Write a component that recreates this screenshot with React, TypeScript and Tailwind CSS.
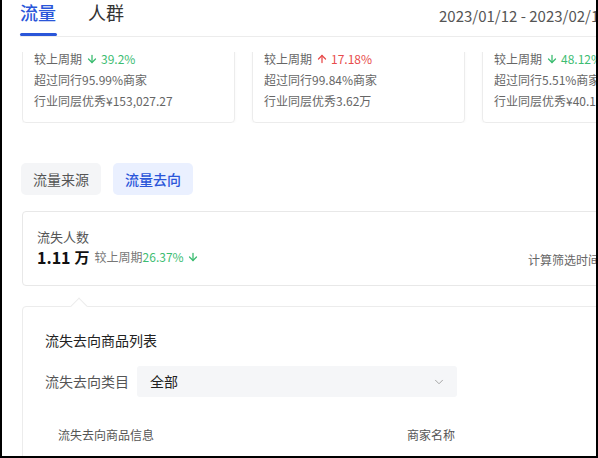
import { ArrowDown, ArrowUp, ChevronDown } from 'lucide-react';

const stats = [
  { trend: 'down', pct: '39.2%', beat: '超过同行95.99%商家', best: '行业同层优秀¥153,027.27' },
  { trend: 'up', pct: '17.18%', beat: '超过同行99.84%商家', best: '行业同层优秀3.62万' },
  { trend: 'down', pct: '48.12%', beat: '超过同行5.51%商家', best: '行业同层优秀¥40.12万' },
];

export default function App() {
  return (
    <div
      className="relative w-[598px] h-[458px] overflow-hidden bg-white border-l-2 border-r-2 border-b-2 border-black"
      style={{ fontFamily: '"Noto Sans CJK SC", "Noto Sans", sans-serif' }}
    >
      {/* Header tabs */}
      <div className="ml-[18px] w-[700px] h-[37px] flex border-b border-[#ececec]">
        <div className="flex flex-col w-[37px] shrink-0">
          <span className="text-[18px] leading-[24px] text-[#2a56d9] font-medium whitespace-nowrap">流量</span>
          <div className="mt-auto h-[3px] bg-[#2a56d9] rounded-sm" />
        </div>
        <span className="ml-[31px] text-[18px] leading-[24px] text-[#333] whitespace-nowrap">人群</span>
        <span className="ml-[315px] mt-[5px] text-[15px] leading-[22px] text-[#555] whitespace-nowrap">
          2023/01/12 - 2023/02/12
        </span>
      </div>

      {/* Stat cards, scrolled */}
      <div className="mt-[15px] ml-[20px] h-[71px] overflow-hidden flex items-end gap-[17px]">
        {stats.map((s, i) => (
          <div
            key={i}
            className="shrink-0 w-[213px] border border-[#ececec] rounded-[4px] shadow-[0_1px_3px_rgba(0,0,0,0.04)] pl-[11px] pb-[11px] text-[12px] leading-[21px] text-[#666] whitespace-nowrap"
          >
            <div className="h-[60px]" />
            <div className="flex items-center">
              较上周期
              {s.trend === 'down' ? (
                <span className="flex items-center ml-1 text-[#3dbd72]">
                  <ArrowDown size={12} strokeWidth={2.6} className="mr-[3px]" />
                  {s.pct}
                </span>
              ) : (
                <span className="flex items-center ml-1 text-[#e84c4c]">
                  <ArrowUp size={12} strokeWidth={2.6} className="mr-[3px]" />
                  {s.pct}
                </span>
              )}
            </div>
            <div>{s.beat}</div>
            <div>{s.best}</div>
          </div>
        ))}
      </div>

      {/* Segmented */}
      <div className="mt-[40px] ml-[19px] flex gap-[12px]">
        <button className="w-[80px] h-[32px] rounded-[5px] bg-[#f4f5f7] text-[14px] text-[#555]">流量来源</button>
        <button className="w-[80px] h-[32px] rounded-[5px] bg-[#eaf0ff] text-[14px] text-[#2a56d9] font-medium">
          流量去向
        </button>
      </div>

      {/* Summary */}
      <div className="mt-[16px] ml-[20px] w-[640px] border border-[#e8e8e8] rounded-[4px] pl-[14px] pt-[15px] pb-[18px]">
        <div className="text-[13px] leading-[20px] text-[#555]">流失人数</div>
        <div className="flex items-center h-[20px] whitespace-nowrap">
          <div className="w-[491px] shrink-0 flex items-center">
            <span className="text-[16px] font-bold text-[#111]">1.11</span>
            <span className="ml-[4px] text-[15px] font-bold text-[#111]">万</span>
            <span className="ml-[5px] text-[12px] text-[#777]">较上周期</span>
            <span className="text-[12px] text-[#3dbd72]">26.37%</span>
            <ArrowDown size={12} strokeWidth={2.6} className="ml-[3px] text-[#3dbd72]" />
          </div>
          <span className="mt-[6px] text-[12px] text-[#666]">计算筛选时间 2023/01/12</span>
        </div>
      </div>

      {/* List panel with arrow */}
      <div className="relative mt-[20px] ml-[20px] w-[640px] h-[200px] border border-[#ececec] rounded-[4px] pl-[22px] pt-[22px]">
        <div className="absolute -top-[7px] left-[50px] w-[12px] h-[12px] rotate-45 bg-white border-l border-t border-[#ececec]" />
        <div className="text-[14px] leading-[22px] text-[#222]">流失去向商品列表</div>
        <div className="mt-[15px] flex items-center">
          <span className="w-[92px] shrink-0 text-[14px] text-[#555]">流失去向类目</span>
          <div className="w-[320px] h-[31px] rounded-[3px] bg-[#f5f6f8] flex items-center pl-[13px] pr-[11px]">
            <span className="text-[14px] text-[#222]">全部</span>
            <ChevronDown size={14} strokeWidth={1.5} className="ml-auto text-[#999]" />
          </div>
        </div>
        <div className="mt-[28px] flex text-[12px] leading-[20px] text-[#555]">
          <span className="ml-[13px] w-[349px] shrink-0">流失去向商品信息</span>
          <span>商家名称</span>
        </div>
      </div>
    </div>
  );
}
